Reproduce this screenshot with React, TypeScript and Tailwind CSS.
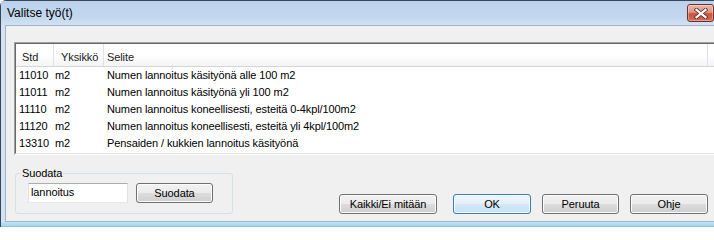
import { ReactNode } from 'react';

type Row = {
  std: string;
  unit: string;
  text: string;
};

const rows: Row[] = [
  { std: '11010', unit: 'm2', text: 'Numen lannoitus käsityönä alle 100 m2' },
  { std: '11011', unit: 'm2', text: 'Numen lannoitus käsityönä yli 100 m2' },
  { std: '11110', unit: 'm2', text: 'Numen lannoitus koneellisesti, esteitä 0-4kpl/100m2' },
  { std: '11120', unit: 'm2', text: 'Numen lannoitus koneellisesti, esteitä yli 4kpl/100m2' },
  { std: '13310', unit: 'm2', text: 'Pensaiden / kukkien lannoitus käsityönä' },
];

const WinButton = ({ children, width, primary }: { children: ReactNode; width: string; primary?: boolean }) => (
  <button
    className={
      primary
        ? `${width} h-[20px] rounded-[3px] border border-[#3c7fb1] bg-[linear-gradient(to_bottom,#eef6fc_0%,#e3f0f9_50%,#d5e8f6_50%,#c9e1f3_100%)] shadow-[inset_0_0_0_1px_#f4faff] text-[11px] leading-[13px] tracking-[-0.1px] text-black`
        : `${width} h-[20px] rounded-[3px] border border-[#707070] bg-[linear-gradient(to_bottom,#f2f2f2_0%,#ebebeb_50%,#dddddd_50%,#cfcfcf_100%)] shadow-[inset_0_0_0_1px_#fcfcfc] text-[11px] leading-[13px] tracking-[-0.1px] text-black`
    }
  >
    {children}
  </button>
);

const App = () => {
  return (
    <div className="w-[714px] h-[227px] overflow-hidden bg-white">
      <div className="w-[760px] h-[240px] rounded-t-[6px] border border-[#3b4756] bg-[linear-gradient(to_right,#d3e3f4,#b6cfeb)] font-['Liberation_Sans',Arial,sans-serif] text-black">
        {/* Title bar */}
        <div className="w-[713px] h-[24px] flex items-center pl-[6px] bg-[linear-gradient(to_bottom,#bcd2ec,#c3d8ef_70%,#d2e2f3)]">
          <span className="text-[12px] leading-[14px]">Valitse työ(t)</span>
          <div className="ml-auto self-start mt-[3px] w-[27px] h-[18px] rounded-[3px] border border-[#6e2f2a] bg-[linear-gradient(to_bottom,#ecb8ab_0%,#df9583_45%,#c9523f_55%,#d46d58_100%)] shadow-[inset_0_0_0_1px_rgba(255,255,255,0.35)] flex items-center justify-center">
            <svg width="14" height="11" viewBox="0 0 14 11">
              <path d="M2.5 1.8 L11.5 9.2 M11.5 1.8 L2.5 9.2" stroke="#5a2a26" strokeWidth="3.8" strokeLinecap="square" />
              <path d="M2.5 1.8 L11.5 9.2 M11.5 1.8 L2.5 9.2" stroke="#ffffff" strokeWidth="2.2" strokeLinecap="square" />
            </svg>
          </div>
        </div>

        {/* Client area */}
        <div className="ml-[4px] w-[750px] h-[197px] border-l border-t border-b border-[#9fb4cb] bg-[#f0f0f0] flex flex-col text-[11px] leading-[13px] tracking-[-0.1px]">
          {/* List */}
          <div className="ml-[8px] mt-[16px] w-[740px] h-[113px] border border-t-[#a0a0a0] border-l-[#a0a0a0] border-r-white border-b-white">
            <div className="h-full border border-t-[#696969] border-l-[#696969] border-r-[#e3e3e3] border-b-[#e3e3e3] bg-white">
              <div className="h-[23px] flex border-b border-[#d5d5d5] bg-[linear-gradient(to_bottom,#ffffff,#ffffff_50%,#f3f4f6)] text-[#1a1a1a]">
                <div className="w-[38px] pt-[7px] pl-[6px] border-r border-[#dfe3e8]">Std</div>
                <div className="w-[50px] pt-[7px] pl-[7px] border-r border-[#dfe3e8]">Yksikkö</div>
                <div className="w-[604px] pt-[7px] pl-[3px] border-r border-[#dfe3e8]">Selite</div>
              </div>
              {rows.map((row) => (
                <div key={row.std} className="h-[17px] flex items-center">
                  <div className="w-[38px] pl-[3px]">{row.std}</div>
                  <div className="w-[50px] pl-[1px]">{row.unit}</div>
                  <div className="w-[604px] pl-[3px] whitespace-nowrap">{row.text}</div>
                </div>
              ))}
            </div>
          </div>

          {/* Bottom row */}
          <div className="mt-[12px] flex items-end">
            <fieldset className="ml-[9px] w-[218px] border border-[#d5dfe5] rounded-[3px] pb-[10px]">
              <legend className="ml-[5px] px-[1px] leading-[13px]">Suodata</legend>
              <div className="mt-[2px] flex items-center">
                <div className="ml-[12px] w-[100px] h-[20px] bg-white border border-t-[#abadb3] border-l-[#e2e3ea] border-r-[#dbdfe6] border-b-[#e3e9ef] pl-[2px] flex items-center">
                  lannoitus
                </div>
                <div className="ml-[8px] mt-[1px]">
                  <WinButton width="w-[77px]">Suodata</WinButton>
                </div>
              </div>
            </fieldset>
            <div className="ml-[106px] flex">
              <WinButton width="w-[98px]">Kaikki/Ei mitään</WinButton>
              <div className="ml-[16px]">
                <WinButton width="w-[78px]" primary>
                  OK
                </WinButton>
              </div>
              <div className="ml-[11px]">
                <WinButton width="w-[77px]">Peruuta</WinButton>
              </div>
              <div className="ml-[11px]">
                <WinButton width="w-[78px]">Ohje</WinButton>
              </div>
            </div>
          </div>
        </div>

        {/* Bottom frame */}
        <div className="h-[6px] bg-[linear-gradient(to_bottom,#bfe4f6,#a6d6ef_60%,#6e9fc2)]" />
      </div>
    </div>
  );
};

export default App;
